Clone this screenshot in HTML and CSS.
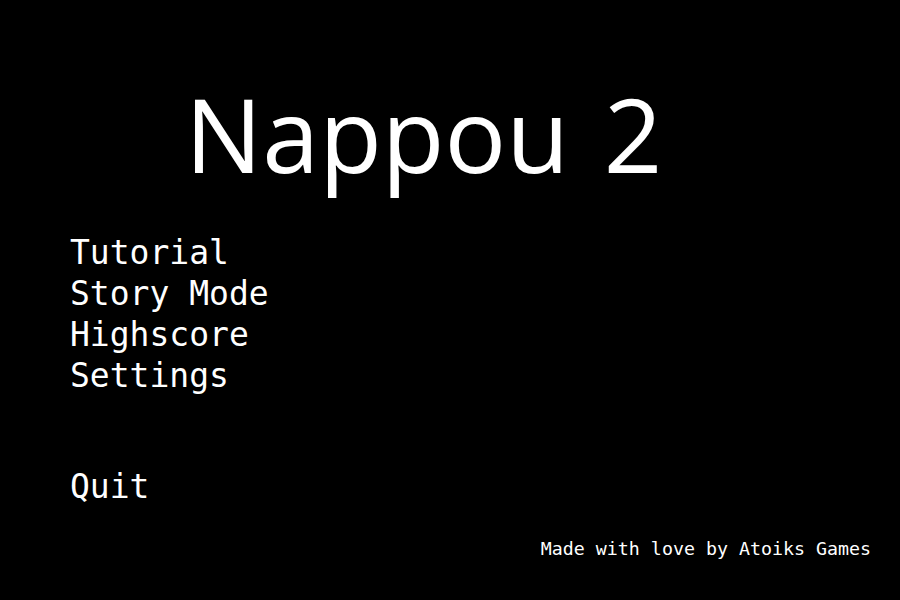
FILE: index.html
```html
<!DOCTYPE html>
<html>
<head>
<meta charset="utf-8">
<link rel="stylesheet" href="styles.css">
</head>
<body>
<div class="screen">
  <h1 class="title">Nappou 2</h1>
  <ul class="menu">
    <li>Tutorial</li>
    <li>Story Mode</li>
    <li>Highscore</li>
    <li>Settings</li>
  </ul>
  <ul class="menu quit">
    <li>Quit</li>
  </ul>
  <div class="footer">Made with love by Atoiks Games</div>
</div>
</body>
</html>
```
FILE: styles.css
```css
html, body {
  margin: 0;
  padding: 0;
  background: #000;
}
.screen {
  width: 900px;
  height: 600px;
  background: #000;
  color: #fff;
  display: flex;
  flex-direction: column;
  box-sizing: border-box;
}
.title {
  margin: 73px 0 0 185px;
  font-family: "Open Sans", sans-serif;
  font-weight: 400;
  font-size: 102.5px;
  line-height: 120px;
  word-spacing: 8px;
}
.menu {
  list-style: none;
  margin: 39px 0 0 70px;
  padding: 0;
  font-family: "DejaVu Sans Mono", monospace;
  font-size: 33px;
  line-height: 41px;
}
.quit {
  margin-top: 70px;
}
.footer {
  align-self: flex-end;
  margin: 31px 29px 0 0;
  font-family: "DejaVu Sans Mono", monospace;
  font-size: 18.3px;
  line-height: 22px;
}
```
